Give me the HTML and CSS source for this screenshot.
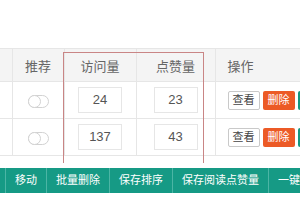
FILE: index.html
```html
<!DOCTYPE html>
<html lang="zh-CN">
<head>
  <meta charset="UTF-8">
  <title>文章列表</title>
  <link rel="stylesheet" href="styles.css">
</head>
<body>
  <div class="page">
    <div class="table-wrap">
      <table class="list">
        <colgroup>
          <col class="c-check">
          <col class="c-rec">
          <col class="c-view">
          <col class="c-like">
          <col class="c-op">
        </colgroup>
        <thead>
          <tr>
            <th></th>
            <th>推荐</th>
            <th>访问量</th>
            <th>点赞量</th>
            <th class="left">操作</th>
          </tr>
        </thead>
        <tbody>
          <tr>
            <td></td>
            <td><span class="switch"><i></i></span></td>
            <td><span class="num">24</span></td>
            <td><span class="num">23</span></td>
            <td class="left ops">
              <span class="btn btn-plain">查看</span>
              <span class="btn btn-red">删除</span>
              <span class="btn btn-green">编辑</span>
            </td>
          </tr>
          <tr>
            <td></td>
            <td><span class="switch"><i></i></span></td>
            <td><span class="num">137</span></td>
            <td><span class="num">43</span></td>
            <td class="left ops">
              <span class="btn btn-plain">查看</span>
              <span class="btn btn-red">删除</span>
              <span class="btn btn-green">编辑</span>
            </td>
          </tr>
        </tbody>
      </table>
      <!-- 标注框 -->
      <div class="highlight"></div>
    </div>

    <div class="toolbar">
      <span class="tool first"></span>
      <span class="tool">移动</span>
      <span class="tool">批量删除</span>
      <span class="tool">保存排序</span>
      <span class="tool">保存阅读点赞量</span>
      <span class="tool">一键复制</span>
    </div>
  </div>
</body>
</html>
```

FILE: styles.css
```css
body {
  margin: 0;
  background: #fff;
  font-family: "Liberation Sans", "Noto Sans CJK SC", sans-serif;
  overflow: hidden;
}

.page {
  width: 300px;
  height: 200px;
  overflow: hidden;
  padding-top: 48px;
  box-sizing: border-box;
}

.table-wrap {
  position: relative;
  width: 400px;
}

.list {
  border-collapse: collapse;
  table-layout: fixed;
  width: 400px;
  color: #666;
  font-size: 13px;
}

.c-check { width: 12px; }
.c-rec { width: 52px; }
.c-view { width: 72px; }
.c-like { width: 79px; }
.c-op { width: 185px; }

.list th,
.list td {
  border: 1px solid #e6e6e6;
  text-align: center;
  padding: 0;
}

.list tr > :first-child {
  border-left: none;
}

.list th {
  height: 32px;
  background: #f4f4f4;
  font-weight: normal;
}

.list td {
  height: 36px;
}

.list .left {
  text-align: left;
  padding-left: 12px;
}

.switch {
  display: inline-block;
  position: relative;
  width: 19px;
  height: 11px;
  border: 1px solid #d2d2d2;
  border-radius: 7px;
  vertical-align: middle;
}

.switch i {
  position: absolute;
  left: -1px;
  top: -1px;
  width: 11px;
  height: 11px;
  border: 1px solid #d2d2d2;
  border-radius: 50%;
  background: #fff;
}

.num {
  display: inline-block;
  width: 42px;
  height: 24px;
  line-height: 24px;
  border: 1px solid #e6e6e6;
  font-size: 13px;
  color: #555;
  vertical-align: middle;
}

.ops {
  white-space: nowrap;
  font-size: 0;
}

.btn {
  display: inline-block;
  height: 17px;
  line-height: 17px;
  padding: 0 4px;
  margin-right: 3px;
  font-size: 11px;
  vertical-align: middle;
  border: 1px solid transparent;
  border-radius: 2px;
}

.btn-plain {
  border-color: #c9c9c9;
  color: #444;
  background: #fff;
}

.btn-red {
  background: #ec5a26;
  color: #fff;
}

.btn-green {
  background: #15967f;
  color: #fff;
}

.highlight {
  position: absolute;
  left: 63px;
  top: 4px;
  width: 139px;
  height: 110px;
  border: 1px solid #c98585;
  border-bottom: none;
}

.toolbar {
  display: flex;
  margin-top: 12px;
  height: 25px;
  background: #169a85;
  white-space: nowrap;
}

.tool {
  flex: none;
  padding: 0 9px;
  line-height: 25px;
  font-size: 11px;
  color: #fff;
  border-left: 1px solid #4cb5a5;
}

.tool.first {
  width: 5px;
  padding: 0;
  border-left: none;
}
```
